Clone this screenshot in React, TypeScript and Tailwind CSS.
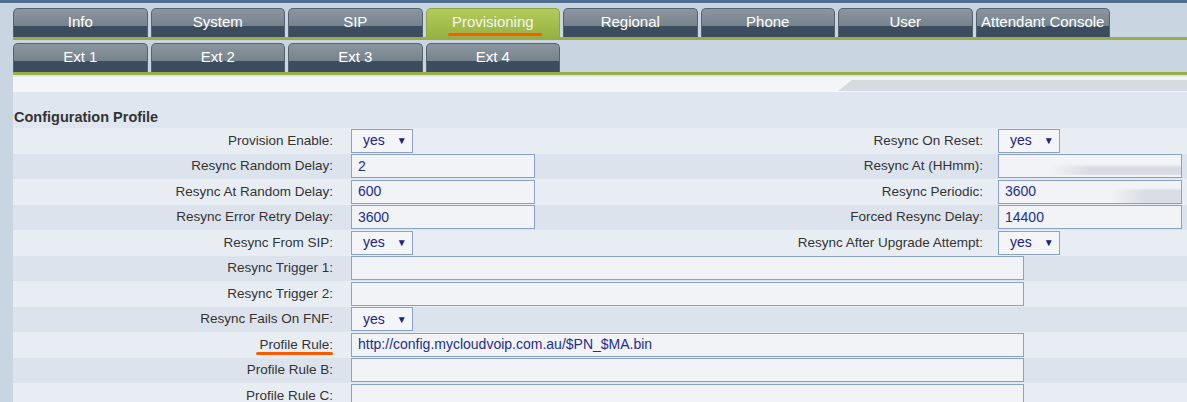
const mainTabs = [
  'Info',
  'System',
  'SIP',
  'Provisioning',
  'Regional',
  'Phone',
  'User',
  'Attendant Console',
];
const extTabs = ['Ext 1', 'Ext 2', 'Ext 3', 'Ext 4'];

type Field =
  | { kind: 'select'; value: string }
  | { kind: 'text'; value: string; smudge?: 'a' | 'b' }
  | { kind: 'wide'; value: string };

type Row = {
  label: string;
  field: Field;
  right?: { label: string; field: Field };
  mark?: boolean;
};

const rows: Row[] = [
  {
    label: 'Provision Enable:',
    field: { kind: 'select', value: 'yes' },
    right: { label: 'Resync On Reset:', field: { kind: 'select', value: 'yes' } },
  },
  {
    label: 'Resync Random Delay:',
    field: { kind: 'text', value: '2' },
    right: { label: 'Resync At (HHmm):', field: { kind: 'text', value: '', smudge: 'a' } },
  },
  {
    label: 'Resync At Random Delay:',
    field: { kind: 'text', value: '600' },
    right: { label: 'Resync Periodic:', field: { kind: 'text', value: '3600', smudge: 'b' } },
  },
  {
    label: 'Resync Error Retry Delay:',
    field: { kind: 'text', value: '3600' },
    right: { label: 'Forced Resync Delay:', field: { kind: 'text', value: '14400' } },
  },
  {
    label: 'Resync From SIP:',
    field: { kind: 'select', value: 'yes' },
    right: {
      label: 'Resync After Upgrade Attempt:',
      field: { kind: 'select', value: 'yes' },
    },
  },
  { label: 'Resync Trigger 1:', field: { kind: 'wide', value: '' } },
  { label: 'Resync Trigger 2:', field: { kind: 'wide', value: '' } },
  { label: 'Resync Fails On FNF:', field: { kind: 'select', value: 'yes' } },
  {
    label: 'Profile Rule:',
    field: { kind: 'wide', value: 'http://config.mycloudvoip.com.au/$PN_$MA.bin' },
    mark: true,
  },
  { label: 'Profile Rule B:', field: { kind: 'wide', value: '' } },
  { label: 'Profile Rule C:', field: { kind: 'wide', value: '' } },
];

function Tab({ label, active }: { label: string; active?: boolean }) {
  return (
    <div
      className={
        active
          ? 'relative flex h-[29px] w-[134.5px] shrink-0 items-start justify-center rounded-t-[5px] border border-b-0 border-[#8fa63e] bg-[linear-gradient(to_bottom,#b2ca5d_0%,#a2bd4c_60%,#97b243_100%)] pt-[3px] text-[15px] text-[#f4f6ee]'
          : 'relative flex h-[29px] w-[134.5px] shrink-0 items-start justify-center rounded-t-[5px] border border-b-0 border-[#56636e] bg-[linear-gradient(to_bottom,#8b969f_0%,#76828c_62%,#3b4d5e_62%,#3a4c5d_100%)] pt-[3px] text-[15px] text-white'
      }
    >
      <span className="leading-[20px]">{label}</span>
      {active && (
        <span className="absolute top-[24px] left-[21px] h-[3px] w-[94px] rounded-full bg-[#ff5a00]" />
      )}
    </div>
  );
}

function Control({ field }: { field: Field }) {
  if (field.kind === 'select') {
    return (
      <div className="flex h-[24px] w-[62px] items-center border border-[#8ba2c4] bg-[#f3f5f8] pl-[11px] text-[14px] text-[#1d237f]">
        <span>{field.value}</span>
        <span className="ml-[12px] text-[10px]">▼</span>
      </div>
    );
  }
  const width = field.kind === 'wide' ? 'w-[673px]' : 'w-[184px]';
  const smudge =
    field.kind === 'text' && field.smudge === 'a'
      ? 'bg-[linear-gradient(to_right,#f1f3f6_28%,transparent_50%),linear-gradient(to_bottom,#f1f3f6_40%,#d8dce2_58%,#d8dce2_88%,#f1f3f6_92%)]'
      : field.kind === 'text' && field.smudge === 'b'
        ? 'bg-[linear-gradient(to_right,#f1f3f6_62%,transparent_80%),linear-gradient(to_bottom,#f1f3f6_30%,#dadde3_45%,#dadde3_95%)]'
        : 'bg-[#f1f3f6]';
  return (
    <div
      className={`flex h-[24px] ${width} items-center border border-[#8ba2c4] ${smudge} pl-[6px] text-[14px] text-[#22308c]`}
    >
      {field.value}
    </div>
  );
}

function FormRow({ row, index }: { row: Row; index: number }) {
  const bg = index % 2 === 0 ? 'bg-[#e8edf4]' : 'bg-[#dce3ec]';
  return (
    <div className={`flex h-[25.5px] shrink-0 items-center ${bg}`}>
      <div className="relative w-[320px] shrink-0 text-right text-[13.5px] text-[#333]">
        {row.label}
        {row.mark && (
          <span className="absolute right-0 top-[17px] h-[3px] w-[77px] rounded-full bg-[#ff5a00]" />
        )}
      </div>
      <div className="ml-[18px] w-[300px] shrink-0">
        <Control field={row.field} />
      </div>
      {row.right && (
        <>
          <div className="w-[332px] shrink-0 text-right text-[13.5px] text-[#333]">
            {row.right.label}
          </div>
          <div className="ml-[15px]">
            <Control field={row.right.field} />
          </div>
        </>
      )}
    </div>
  );
}

export default function App() {
  return (
    <div className="flex h-[402px] w-[1187px] flex-col overflow-hidden bg-[#c9d6e2] font-['Liberation_Sans',Arial,sans-serif]">
      <div className="h-[3px] shrink-0 bg-[#4f6f90]" />
      <div className="flex shrink-0 gap-[3px] pt-[5px] pl-[13px]">
        {mainTabs.map((t) => (
          <Tab key={t} label={t} active={t === 'Provisioning'} />
        ))}
      </div>
      <div className="ml-[13px] h-[3px] shrink-0 bg-[#98ad45]" />
      <div className="flex shrink-0 gap-[3px] pt-[3px] pl-[13px]">
        {extTabs.map((t) => (
          <Tab key={t} label={t} />
        ))}
      </div>
      <div className="ml-[13px] h-[3px] shrink-0 bg-[#98ad45]" />

      <div className="ml-[13px] flex min-h-0 flex-1 flex-col bg-[#dfe6ef] pt-[2px]">
        <div className="flex h-[15px] shrink-0 items-start bg-[#f3f5f8] pl-[825px]">
          <div className="mt-[3px] h-[11px] flex-1 bg-[#d6dbe1] [clip-path:polygon(4%_0,100%_0,100%_100%,0_100%)]" />
        </div>
        <div className="h-[16px] shrink-0" />
        <div className="flex h-[20px] shrink-0 items-center pl-[1px] text-[14.5px] font-bold text-[#333]">
          Configuration Profile
        </div>
        {rows.map((r, i) => (
          <FormRow key={r.label} row={r} index={i} />
        ))}
      </div>
    </div>
  );
}
